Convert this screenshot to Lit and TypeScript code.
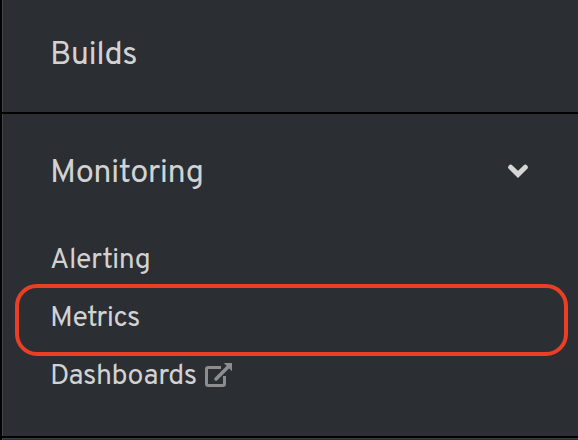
import { LitElement, html, css } from "lit";
import { customElement } from "lit/decorators.js";

@customElement("app-root")
export class AppRoot extends LitElement {
  static styles = css`
    :host { display: block; height: 440px; overflow: hidden; background: #2b2e33; color: #d2d2d2; font-family: "Overpass", "Open Sans", "Noto Sans", sans-serif; }
    nav { box-sizing: border-box; height: 440px; border-left: 2px solid #030303; box-shadow: inset 1px 0 #42454a; display: flex; flex-direction: column; }
    .section { box-sizing: border-box; flex: none; display: flex; align-items: center; justify-content: space-between; padding: 0 50px 0 48px; font-size: 32.5px; line-height: 40px; letter-spacing: -0.5px; }
    .builds { height: 114px; border-bottom: 2px solid #030303; }
    .monitoring { height: 116px; }
    .monitoring .label { padding-top: 4px; }
    .items { flex: none; height: 208px; box-sizing: border-box; border-bottom: 2px solid #030303; }
    .item { position: relative; height: 58px; display: flex; align-items: center; gap: 8px; padding-left: 48px; font-size: 28.5px; line-height: 36px; letter-spacing: -0.45px; }
    .item .label { padding-top: 4px; }
    .selected::after { content: ""; position: absolute; left: 13px; top: -4px; width: 553px; height: 72px; box-sizing: border-box; border: 4px solid #e83f25; border-radius: 22px; }
    .label { white-space: nowrap; }
    .foot { flex: 1; border-top: 1px solid #3a3d42; }
    svg { display: block; flex: none; }
    .chevron { margin-bottom: 2px; }
  `;
  render() {
    return html`<nav>
      <div class="section builds"><span class="label">Builds</span></div>
      <div class="section monitoring"><span class="label">Monitoring</span>
        <svg class="chevron" width="20" height="14" viewBox="0 0 20 14"><path d="M2.7 3.2 10 10.4 17.3 3.2" fill="none" stroke="#d6d6d6" stroke-width="5" stroke-linecap="round"/></svg>
      </div>
      <div class="items">
        <div class="item"><span class="label">Alerting</span></div>
        <div class="item selected"><span class="label">Metrics</span></div>
        <div class="item"><span class="label">Dashboards</span>
          <svg class="external" width="27" height="24" viewBox="0 0 27 24" fill="none" stroke="#8b8d8f">
            <path d="M16 4.5H3.3Q1.5 4.5 1.5 6.2V20.8Q1.5 22.5 3.3 22.5H17.7Q19.5 22.5 19.5 20.8V13" stroke-width="3"/>
            <path d="M11 16 23 4" stroke-width="3.6" stroke-linecap="round"/>
            <path d="M18.8 0H27V8.2Z" fill="#8b8d8f" stroke="none"/>
          </svg>
        </div>
      </div>
      <div class="foot"></div>
    </nav>`;
  }
}
